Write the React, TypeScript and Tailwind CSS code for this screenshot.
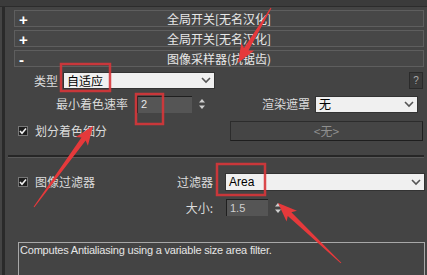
import React from 'react';

const cjk = { fontFamily: '"Noto Sans CJK SC", "Noto Sans", sans-serif' };
const latin = { fontFamily: '"Liberation Sans", Arial, sans-serif' };

const Chevron = () => (
  <svg width="10" height="7" viewBox="0 0 10 7" className="shrink-0">
    <polyline points="1,1 5,5 9,1" fill="none" stroke="#555" strokeWidth="1.6" />
  </svg>
);

const Spinner = () => (
  <svg width="8" height="14" viewBox="0 0 8 14" className="shrink-0">
    <polygon points="4,2 7,5.5 1,5.5" fill="#cfcfcf" />
    <polygon points="4,12 7,8.5 1,8.5" fill="#cfcfcf" />
  </svg>
);

const Check = () => (
  <div className="w-[10px] h-[10px] bg-[#1e1e1e] border border-[#777] flex items-center justify-center shrink-0">
    <svg width="8" height="8" viewBox="0 0 8 8">
      <polyline points="1,4 3,6.3 7,1.5" fill="none" stroke="#f2f2f2" strokeWidth="1.6" />
    </svg>
  </div>
);

const Header = ({ sign, title }: { sign: string; title: string }) => (
  <div className="relative h-[17px] mt-[3px] ml-[9px] mr-[3px] bg-[#474747] border border-[#5e5e5e] flex items-center justify-center">
    <span className="absolute left-[4px] top-[-2px] text-[15px] text-white font-bold" style={latin}>{sign}</span>
    <span className="text-[12px] text-[#e8e8e8] leading-none" style={cjk}>{title}</span>
  </div>
);

function arrow(tx: number, ty: number, px: number, py: number) {
  const dx = px - tx;
  const dy = py - ty;
  const len = Math.hypot(dx, dy);
  const ux = dx / len;
  const uy = dy / len;
  const nx = -uy;
  const ny = ux;
  const bx = px - ux * 19;
  const by = py - uy * 19;
  const pts = [
    [tx + nx * 0.5, ty + ny * 0.5],
    [bx + ux * 3 + nx * 2.6, by + uy * 3 + ny * 2.6],
    [bx + nx * 7.5, by + ny * 7.5],
    [px, py],
    [bx - nx * 7.5, by - ny * 7.5],
    [bx + ux * 3 - nx * 2.6, by + uy * 3 - ny * 2.6],
    [tx - nx * 0.5, ty - ny * 0.5],
  ];
  return pts.map(p => p.join(',')).join(' ');
}

export default function App() {
  return (
    <div className="relative w-[427px] h-[275px] overflow-hidden bg-[#444444] flex flex-col select-none">
      {/* top strip */}
      <div className="h-[7px] bg-[#3b3b3b] border-b border-[#2c2c2c] shrink-0" />

      <div className="flex-1 flex flex-col border-l-[3px] border-[#2a2a2a] ml-[2px]">
        <Header sign="+" title="全局开关[无名汉化]" />
        <Header sign="+" title="全局开关[无名汉化]" />
        <Header sign="-" title="图像采样器(抗锯齿)" />

        {/* section 1 */}
        <div className="flex items-center h-[17px] mt-[5px]">
          <div className="w-[55px] text-right pr-[2px] text-[12px] text-[#dcdcdc]" style={cjk}>类型</div>
          <div className="ml-[3px] w-[152px] h-[17px] bg-[#f0f0f0] border border-[#333] flex items-center px-[3px]">
            <span className="flex-1 text-[12px] text-black leading-none" style={cjk}>自适应</span>
            <Chevron />
          </div>
          <div className="flex-1" />
          <div className="w-[14px] h-[17px] mr-[4px] bg-[#3a3a3a] border border-[#2a2a2a] flex items-center justify-center text-[10px] text-[#aaa]" style={latin}>?</div>
        </div>

        <div className="flex items-center h-[18px] mt-[6px]">
          <div className="w-[125px] text-right pr-[2px] text-[12px] text-[#dcdcdc]" style={cjk}>最小着色速率</div>
          <div className="ml-[7px] w-[55px] h-[17px] bg-[#555555] border-t border-l border-[#1f1f1f] flex items-center px-[3px] text-[11px] text-[#e8e8e8]" style={latin}>2</div>
          <div className="ml-[5px] w-[10px] flex justify-center"><Spinner /></div>
          <div className="w-[105px] text-right pr-[2px] text-[12px] text-[#dcdcdc]" style={cjk}>渲染遮罩</div>
          <div className="ml-[3px] w-[103px] h-[17px] bg-[#f0f0f0] border border-[#333] flex items-center px-[3px]">
            <span className="flex-1 text-[12px] text-black leading-none" style={cjk}>无</span>
            <Chevron />
          </div>
        </div>

        <div className="flex items-center h-[20px] mt-[8px]">
          <div className="ml-[13px]"><Check /></div>
          <span className="ml-[7px] text-[12px] text-[#dcdcdc]" style={cjk}>划分着色细分</span>
          <div className="flex-1" />
          <div className="w-[193px] h-[20px] mr-[4px] border border-t-[#2c2c2c] border-l-[#2c2c2c] border-r-[#1e1e1e] border-b-[#1e1e1e] bg-[#454545] flex items-center justify-center text-[12px] text-[#8f8f8f]" style={cjk}>&lt;无&gt;</div>
        </div>

        {/* separator */}
        <div className="mt-[14px] ml-[3px] mr-[3px] h-[3px] border-t-2 border-[#262626] border-b border-b-[#595959]" />

        {/* section 2 */}
        <div className="flex items-center h-[18px] mt-[15px]">
          <div className="w-[155px] flex items-center">
            <div className="ml-[13px]"><Check /></div>
            <span className="ml-[7px] text-[12px] text-[#dcdcdc]" style={cjk}>图像过滤器</span>
          </div>
          <div className="w-[55px] text-right pr-[2px] text-[12px] text-[#dcdcdc]" style={cjk}>过滤器</div>
          <div className="ml-[10px] flex-1 mr-[2px] h-[18px] bg-[#f0f0f0] border border-[#333] flex items-center px-[3px]">
            <span className="flex-1 text-[12px] text-black leading-none" style={latin}>Area</span>
            <Chevron />
          </div>
        </div>

        <div className="flex items-center h-[17px] mt-[8px]">
          <div className="w-[210px] text-right pr-[2px] text-[12px] text-[#dcdcdc]" style={cjk}>大小:</div>
          <div className="ml-[11px] w-[42px] h-[17px] bg-[#555555] border-t border-l border-[#1f1f1f] flex items-center px-[3px] text-[11px] text-[#cfcfcf]" style={latin}>1.5</div>
          <div className="ml-[5px] w-[10px] flex justify-center"><Spinner /></div>
        </div>

        {/* description */}
        <div className="mt-[26px] ml-[13px] mr-[2px] flex-1 border border-[#a8a8a8] border-b-0 px-[1px] pt-[1px]">
          <div className="text-[11px] text-[#e6e6e6] leading-tight tracking-[-0.2px]" style={latin}>Computes Antialiasing using a variable size area filter.</div>
        </div>
      </div>

      {/* annotations */}
      <svg className="absolute inset-0 pointer-events-none" width="427" height="275" viewBox="0 0 427 275">
        <g fill="none" stroke="#d8363a" strokeWidth="2.5" opacity="0.9">
          <rect x="61" y="64" width="49" height="27" />
          <rect x="136" y="94" width="27" height="30" />
          <rect x="217" y="164" width="48" height="31" />
        </g>
        <g fill="#e5393b">
          <polygon points={arrow(271, 8, 238, 63)} />
          <polygon points={arrow(34, 207, 93, 126)} />
          <polygon points={arrow(341, 263, 278, 203)} />
        </g>
      </svg>
    </div>
  );
}
